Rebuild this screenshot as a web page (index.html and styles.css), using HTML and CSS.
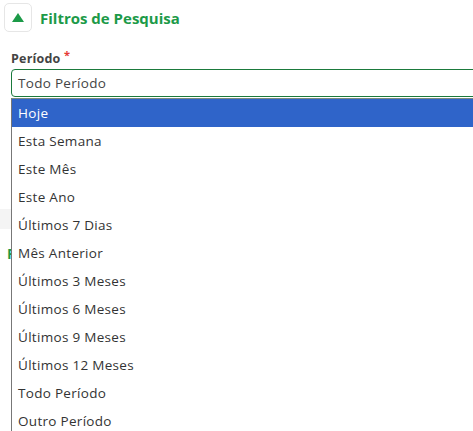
FILE: index.html
```html
<!DOCTYPE html>
<html lang="pt">
<head>
<meta charset="utf-8">
<link rel="stylesheet" href="styles.css">
</head>
<body>
<div class="page">
  <div class="header">
    <div class="toggle">
      <svg width="12" height="9" viewBox="0 0 12 9"><polygon points="6,0 12,9 0,9" fill="#1c9a48"/></svg>
    </div>
    <h2 class="title">Filtros de Pesquisa</h2>
  </div>
  <div class="field">
    <label class="label">Período <span class="req">*</span></label>
    <div class="select-wrap">
      <div class="select">Todo Período</div>
      <ul class="dropdown">
        <li class="opt active">Hoje</li>
        <li class="opt">Esta Semana</li>
        <li class="opt">Este Mês</li>
        <li class="opt">Este Ano</li>
        <li class="opt">Últimos 7 Dias</li>
        <li class="opt">Mês Anterior</li>
        <li class="opt">Últimos 3 Meses</li>
        <li class="opt">Últimos 6 Meses</li>
        <li class="opt">Últimos 9 Meses</li>
        <li class="opt">Últimos 12 Meses</li>
        <li class="opt">Todo Período</li>
        <li class="opt">Outro Período</li>
      </ul>
    </div>
  </div>
  <div class="behind">
    <div class="band"></div>
    <div class="section-title">F</div>
  </div>
</div>
</body>
</html>
```
FILE: styles.css
```css
* { box-sizing: border-box; }
html, body { margin: 0; padding: 0; background: #fff; overflow: hidden; }
body { font-family: "Open Sans", "Liberation Sans", sans-serif; width: 473px; height: 431px; }
.page { position: relative; padding: 3px 0 0 4px; }
.header { display: flex; align-items: center; gap: 8px; }
.toggle {
  width: 28px; height: 29px;
  border: 1px solid #e6e6e6; border-radius: 5px;
  display: flex; align-items: center; justify-content: center;
}
.title { margin: 0; font-size: 15px; font-weight: 700; color: #1c9a48; letter-spacing: 0; }
.field { padding: 14px 0 0 7px; }
.label { display: block; font-size: 12.5px; font-weight: 700; color: #444; line-height: 17px; height: 17px; letter-spacing: 0.2px; }
.req { color: #e53935; font-size: 11px; vertical-align: 4px; }
.select-wrap { position: relative; margin-top: 6px; }
.select {
  width: 480px; height: 28px;
  border: 1px solid #1b7a3c; border-radius: 4px;
  padding: 0 6px; font-size: 13.5px; letter-spacing: 0.3px; color: #444; line-height: 26px;
}
.dropdown {
  position: absolute; left: 0; top: 29px; z-index: 5;
  width: 480px; margin: 0; padding: 0; list-style: none;
  background: #fff; border-left: 1px solid #777; border-top: 1px solid #7a8a80;
}
.opt { height: 28px; line-height: 28px; padding-left: 6px; font-size: 13.5px; letter-spacing: 0.3px; color: #333; }
.opt.active { background: #2f64c9; color: #fff; }
.behind { padding-top: 112px; margin-left: -4px; }
.band { height: 20px; background: #f4f4f4; }
.section-title { margin-top: 18px; padding-left: 7px; font-size: 14px; font-weight: 700; color: #1c9a48; line-height: 14px; }
```
